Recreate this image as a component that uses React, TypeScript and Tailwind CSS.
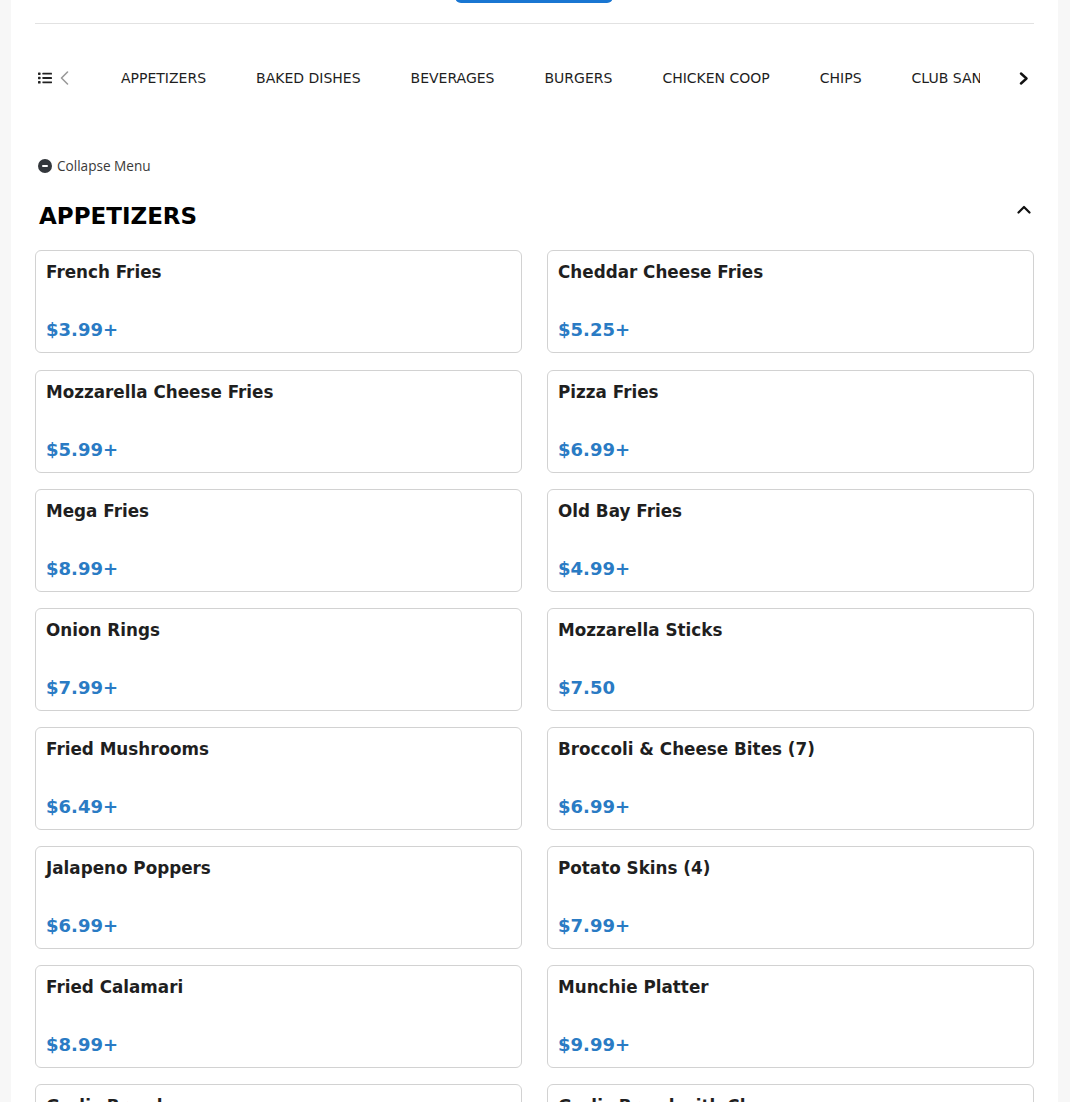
import React from "react";

const categories = [
  "APPETIZERS",
  "BAKED DISHES",
  "BEVERAGES",
  "BURGERS",
  "CHICKEN COOP",
  "CHIPS",
  "CLUB SANDWICHES",
  "DESSERTS",
];

const items: [string, string][] = [
  ["French Fries", "$3.99+"],
  ["Cheddar Cheese Fries", "$5.25+"],
  ["Mozzarella Cheese Fries", "$5.99+"],
  ["Pizza Fries", "$6.99+"],
  ["Mega Fries", "$8.99+"],
  ["Old Bay Fries", "$4.99+"],
  ["Onion Rings", "$7.99+"],
  ["Mozzarella Sticks", "$7.50"],
  ["Fried Mushrooms", "$6.49+"],
  ["Broccoli & Cheese Bites (7)", "$6.99+"],
  ["Jalapeno Poppers", "$6.99+"],
  ["Potato Skins (4)", "$7.99+"],
  ["Fried Calamari", "$8.99+"],
  ["Munchie Platter", "$9.99+"],
  ["Garlic Bread", "$4.99+"],
  ["Garlic Bread with Cheese", "$5.99+"],
];

function ListIcon() {
  return (
    <svg width="14" height="12" viewBox="0 0 14 12" fill="#222">
      <rect x="0" y="0.5" width="2.6" height="2.4" rx="0.6" />
      <rect x="0" y="4.8" width="2.6" height="2.4" rx="0.6" />
      <rect x="0" y="9.1" width="2.6" height="2.4" rx="0.6" />
      <rect x="4.4" y="0.8" width="9.6" height="1.8" rx="0.4" />
      <rect x="4.4" y="5.1" width="9.6" height="1.8" rx="0.4" />
      <rect x="4.4" y="9.4" width="9.6" height="1.8" rx="0.4" />
    </svg>
  );
}

export default function App() {
  return (
    <div className="min-h-screen bg-[#f7f7f7] overflow-hidden" style={{ fontFamily: '"DejaVu Sans", sans-serif' }}>
      <div className="ml-[11px] w-[1047px] bg-white px-6 pb-10">
        <div className="flex justify-center">
          <button className="-mt-[37px] ml-[-2px] h-[40px] w-[158px] rounded-[6px] bg-[#1976d2]" />
        </div>
        <div className="mt-[20px] h-px bg-[#e2e2e2]" />

        <div className="mt-[34px] flex h-[40px] items-center">
          <div className="ml-[3px]">
            <ListIcon />
          </div>
          <div className="ml-[8px]">
            <svg width="9" height="14" viewBox="0 0 9 14" fill="none">
              <polyline points="7.5,1 1.5,7 7.5,13" stroke="#9a9a9a" strokeWidth="1.6" strokeLinecap="round" strokeLinejoin="round" />
            </svg>
          </div>
          <div className="ml-[27px] flex flex-1 overflow-hidden whitespace-nowrap">
            {categories.map((c) => (
              <div key={c} className="shrink-0 px-[25px] text-[14px] leading-[20px] text-[#1e1e1e]">
                {c}
              </div>
            ))}
          </div>
          <div className="ml-[39px] mr-[5px]">
            <svg width="10" height="13" viewBox="0 0 10 13" fill="none">
              <polyline points="2,1.5 7.5,6.5 2,11.5" stroke="#111" strokeWidth="2.4" strokeLinecap="round" strokeLinejoin="round" />
            </svg>
          </div>
        </div>

        <div className="mt-[58px] flex h-[20px] items-center">
          <div className="ml-[3px] flex h-[14px] w-[14px] items-center justify-center rounded-full bg-[#33373c]">
            <div className="h-[2px] w-[6px] rounded-sm bg-white" />
          </div>
          <span className="ml-[5px] text-[13.6px] text-[#3a3a3a]" style={{ fontFamily: '"Open Sans", sans-serif' }}>
            Collapse Menu
          </span>
        </div>

        <div className="mt-[26px] flex items-start justify-between">
          <h2 className="pl-[4px] text-[23px] font-bold leading-[28px] text-black">APPETIZERS</h2>
          <div className="mr-[3px] mt-[3px]">
            <svg width="14" height="9" viewBox="0 0 14 9" fill="none">
              <polyline points="1.5,7.5 7,2 12.5,7.5" stroke="#111" strokeWidth="2.2" strokeLinecap="round" strokeLinejoin="round" />
            </svg>
          </div>
        </div>

        <div className="mt-[20.4px] grid grid-cols-2 gap-x-[25px] gap-y-[16.14px]">
          {items.map(([name, price]) => (
            <div
              key={name}
              className="flex h-[103px] flex-col justify-between rounded-[6px] border border-[#d2d2d2] px-[10px] pb-[12px] pt-[11px]"
            >
              <div className="text-[16.8px] font-bold leading-[20px] text-[#1f1f1f]">{name}</div>
              <div className="text-[18px] font-bold leading-[21px] text-[#2a7bc4]">{price}</div>
            </div>
          ))}
        </div>
      </div>
    </div>
  );
}
